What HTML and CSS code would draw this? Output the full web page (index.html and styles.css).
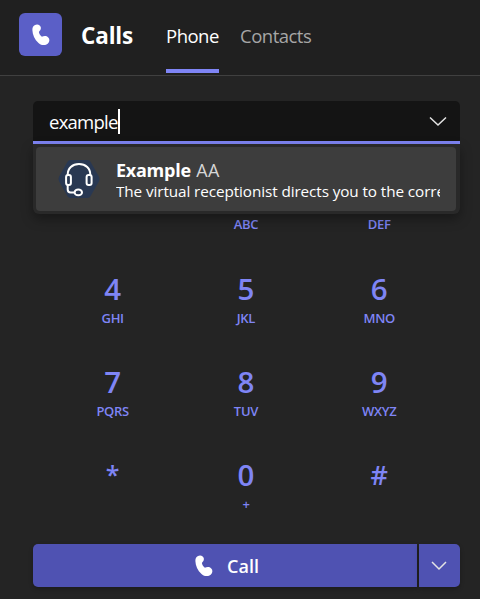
FILE: index.html
```html
<!DOCTYPE html>
<html lang="en">
<head>
<meta charset="utf-8">
<title>Calls</title>
<link rel="stylesheet" href="styles.css">
</head>
<body>
<header class="header">
  <div class="app-icon">
    <svg width="18" height="22" viewBox="0 0 18 22"><path class="handset" d="M2.6 1.2C5.3-.4 8.7.9 8.9 3.8c.1 2-1.1 3-2 4.1.4 1.900 1.400 3.600 3 4.900 1.200-.5 2.500-1.300 4.200-.7 2.800 1 4.200 3.900 2.600 6.300-2.400 3.500-6.800 3.500-10.200.5C2.600 15.500.5 10.600.4 6.200.3 3.700 1 2.100 2.600 1.200z"/></svg>
  </div>
  <h1 class="title">Calls</h1>
  <nav class="tabs">
    <a class="tab tab-active">Phone</a>
    <a class="tab tab-contacts">Contacts</a>
  </nav>
</header>
<main class="dialer">
  <div class="search">
    <span class="query">example</span><span class="caret"></span>
    <svg class="search-chevron" width="18" height="11" viewBox="0 0 18 11"><path class="line" d="M1 1.500l8 7.500 8-7.500"/></svg>
    <div class="menu">
      <div class="option">
        <svg class="avatar" width="42" height="38" viewBox="0 0 42 38">
          <path class="hex" d="M12.500 0h17q2 0 3 1.800L41 16.800q1 2.200 0 4.400l-8.500 15q-1 1.800-3 1.800h-17q-2 0-3-1.800L1 21.200q-1-2.200 0-4.400l8.500-15Q10.500 0 12.500 0z"/>
          <g class="headset"><path d="M9.700 15C9.500 8.400 14.400 4 21 4s11.500 4.400 11.300 11M9.700 25v4.500q0 3 3 3h3.800"/><rect x="8.100" y="15" width="4.800" height="10" rx="2"/><rect x="28.600" y="15" width="5" height="10" rx="2"/><ellipse cx="20.300" cy="32.400" rx="3.700" ry="2.900"/></g>
        </svg>
        <div class="details">
          <div class="name"><b>Example</b> <span>AA</span></div>
          <div class="description">The virtual receptionist directs you to the corre</div>
        </div>
      </div>
    </div>
  </div>
  <div class="keypad">
    <div class="key"></div>
    <div class="key key-covered"><span class="digit"></span><span class="letters">ABC</span></div>
    <div class="key key-covered"><span class="digit"></span><span class="letters">DEF</span></div>
    <div class="key"><span class="digit">4</span><span class="letters">GHI</span></div>
    <div class="key"><span class="digit">5</span><span class="letters">JKL</span></div>
    <div class="key"><span class="digit">6</span><span class="letters">MNO</span></div>
    <div class="key"><span class="digit">7</span><span class="letters">PQRS</span></div>
    <div class="key"><span class="digit">8</span><span class="letters">TUV</span></div>
    <div class="key"><span class="digit">9</span><span class="letters">WXYZ</span></div>
    <div class="key"><span class="digit star">*</span></div>
    <div class="key"><span class="digit">0</span><span class="letters">+</span></div>
    <div class="key"><span class="digit hash">#</span></div>
  </div>
  <div class="actions">
    <button class="call">
      <svg width="18" height="22" viewBox="0 0 18 22"><path class="handset" d="M2.600 1.200C5.300-.4 8.700.9 8.900 3.800c.1 2-1.100 3-2 4.100.4 1.900 1.400 3.600 3 4.900 1.200-.5 2.500-1.300 4.200-.7 2.800 1 4.200 3.900 2.600 6.300-2.400 3.500-6.800 3.500-10.200.5C2.600 15.500.5 10.600.4 6.200.3 3.700 1 2.100 2.600 1.200z"/></svg>
      <span>Call</span>
    </button>
    <button class="more"><svg width="16" height="10" viewBox="0 0 16 10"><path class="line" d="M1 1l7 7 7-7"/></svg></button>
  </div>
</main>
</body>
</html>
```
FILE: styles.css
```css
* { box-sizing: border-box; }
body {
  margin: 0;
  height: 599px;
  overflow: hidden;
  background: #242424;
  color: #fff;
  font-family: "Open Sans", "Noto Sans", sans-serif;
}
.header {
  display: flex;
  height: 76px;
  padding-left: 19px;
  background: #202020;
  border-bottom: 1px solid #404040;
}
.app-icon {
  display: flex;
  align-items: center;
  justify-content: center;
  width: 43px;
  height: 43px;
  margin-top: 13px;
  border-radius: 6px;
  background: #5b5fc7;
}
.handset { fill: #fff; }
.title {
  width: 104px;
  margin: 0;
  padding: 20px 0 0 19px;
  font-size: 22.500px;
  line-height: 32px;
  font-weight: 700;
  letter-spacing: -0.150px;
}
.tabs { display: flex; gap: 21px; }
.tab {
  height: 73px;
  padding-top: 21px;
  font-size: 18.500px;
  line-height: 30px;
  white-space: nowrap;
}
.tab-active { width: 53px; border-bottom: 4px solid #7f85f5; letter-spacing: -0.500px; }
.tab-contacts { color: #a6a6a6; letter-spacing: -0.500px; }
.dialer { padding: 25px 20px 0 33px; }
.search {
  position: relative;
  display: flex;
  align-items: center;
  height: 43px;
  padding: 0 13px 0 16px;
  border-bottom: 3px solid #7f85f5;
  border-radius: 5px 5px 0 0;
  background: #141414;
}
.query { font-size: 18.500px; line-height: 30px; letter-spacing: -0.750px; padding-top: 2px; }
.caret { width: 2px; height: 25px; background: #fff; }
.search-chevron { margin-left: auto; }
.line { fill: none; stroke: #e4e4e4; stroke-width: 1.500; }
.menu {
  position: absolute;
  z-index: 1;
  top: 43px;
  left: 0;
  width: 427px;
  height: 70px;
  padding: 3px 4px 3px 3px;
  border-radius: 0 0 6px 6px;
  background: #292929;
  box-shadow: 0 5px 12px rgba(0, 0, 0, 0.350);
}
.option {
  display: flex;
  height: 64px;
  padding: 0 16px 0 22px;
  border-radius: 4px;
  background: #3d3d3d;
}
.avatar { flex: none; margin-top: 13px; }
.hex { fill: #293852; }
.headset { fill: none; stroke: #fff; stroke-width: 2; }
.details { flex: 1; min-width: 0; padding: 11px 0 0 16px; }
.name { font-size: 18px; line-height: 24px; letter-spacing: -0.250px; }
.name span { margin-left: 1px; color: #d6d6d6; letter-spacing: 0.300px; }
.description {
  overflow: hidden;
  margin-top: -1px;
  font-size: 15.300px;
  line-height: 20px;
  letter-spacing: -0.100px;
  white-space: nowrap;
}
.keypad {
  display: grid;
  grid-template-columns: repeat(3, 133.300px);
  grid-auto-rows: 56px;
  row-gap: 37px;
  margin: 34px 0 31px 13px;
  color: #7f85f5;
}
.key { display: flex; flex-direction: column; align-items: center; }
.digit { height: 38px; font-size: 29.500px; line-height: 36px; font-weight: 600; }
.key-covered .digit { height: 37px; }
.star, .hash { font-size: 27px; line-height: 35px; }
.star { font-size: 25px; }
.letters { font-size: 13px; line-height: 18px; font-weight: 600; letter-spacing: -0.300px; }
.actions { display: flex; gap: 2px; height: 43px; }
.call, .more {
  display: flex;
  align-items: center;
  justify-content: center;
  padding: 0;
  border: 0;
  background: #4f52b2;
  color: #fff;
  box-shadow: 0 2px 4px rgba(0, 0, 0, 0.250);
  font: 600 18px/30px "Open Sans", "Noto Sans", sans-serif;
}
.call { width: 384px; gap: 14px; padding-left: 4px; border-radius: 5px 0 0 5px; }
.more { width: 41px; padding-right: 2px; border-radius: 0 5px 5px 0; }
```
